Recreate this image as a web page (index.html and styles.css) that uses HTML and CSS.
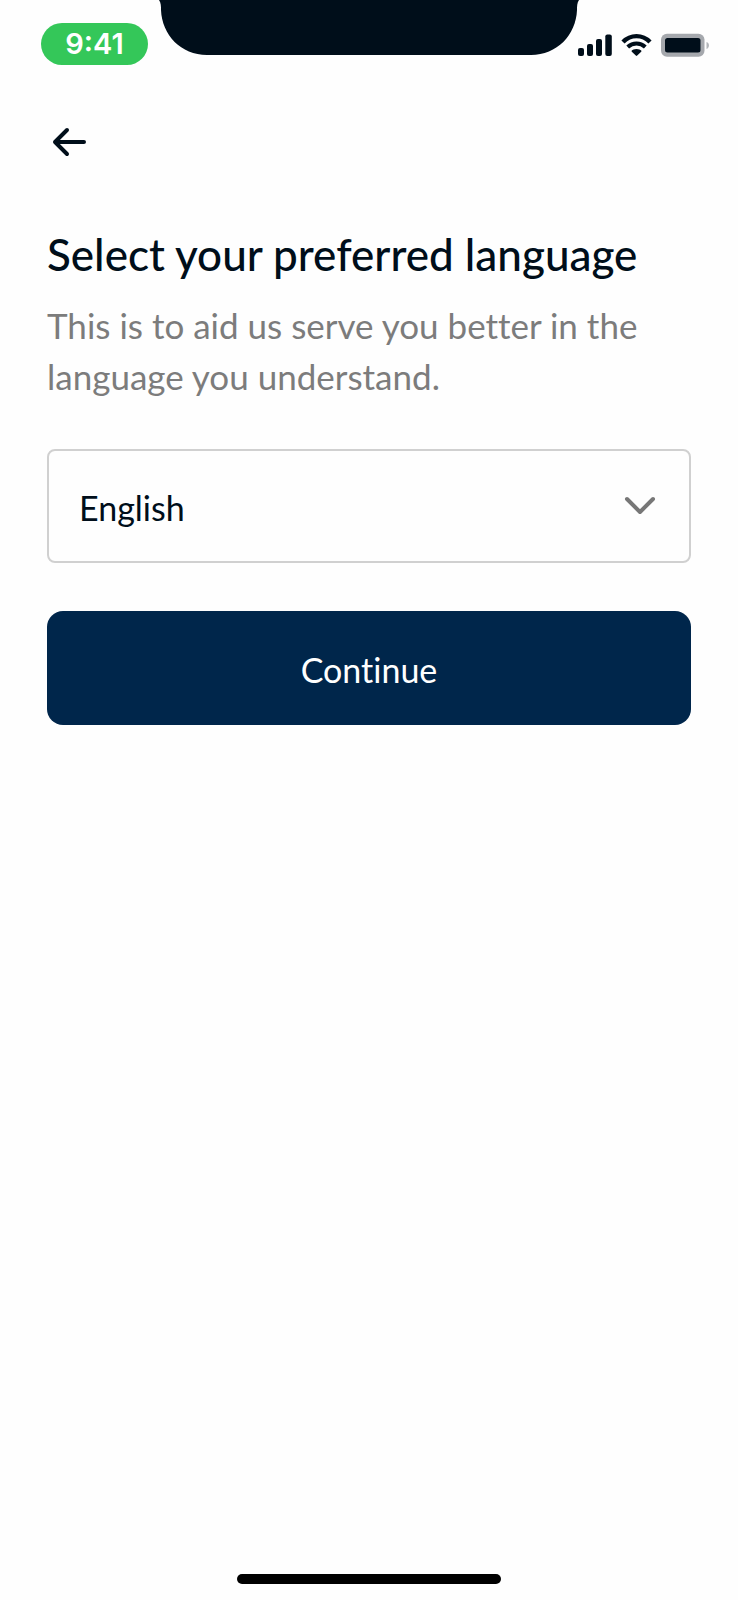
FILE: index.html
```html
<!DOCTYPE html>
<html lang="en">
<head>
<meta charset="utf-8">
<meta name="viewport" content="width=device-width, initial-scale=1">
<title>Select your preferred language</title>
<link rel="stylesheet" href="styles.css">
</head>
<body class="screen">
  <header class="status">
    <div class="status-left"><time class="clock">9:41</time></div>
    <svg class="notch" viewBox="0 0 420 55" aria-hidden="true">
      <path d="M0 0C2 3 2 6 2 10C3 35 22 55 48 55H372C398 55 417 35 418 10C418 6 418 3 420 0Z" fill="#000e1a"/>
    </svg>
    <div class="status-right">
      <svg class="status-icons" viewBox="1 0 132 24" role="img" aria-label="Signal, Wi-Fi and battery">
        <g fill="#000e1a">
          <rect x="0" y="14" width="6" height="8" rx="2"/>
          <rect x="9" y="10" width="6" height="12" rx="2"/>
          <rect x="18" y="5" width="6" height="17" rx="2"/>
          <rect x="27.300" y="0.500" width="6.500" height="21.500" rx="2"/>
          <path d="M58.500 15C60.800 15 62.400 15.800 63.200 16.500C63.600 16.900 63.600 17.300 63.200 17.700L59.200 21.600C58.700 22.100 58.300 22.100 57.800 21.600L53.800 17.700C53.400 17.300 53.400 16.900 53.800 16.500C54.600 15.800 56.200 15 58.500 15Z"/>
        </g>
        <g fill="none" stroke="#000e1a">
          <path d="M45 8C52.500 .2 64.500 .2 72 8" stroke-width="4.400"/>
          <path d="M49.700 13C54.800 8.200 62.200 8.200 67.300 13" stroke-width="4"/>
        </g>
        <rect x="83" y="-.3" width="43.500" height="23" rx="6" fill="#a5a8ad"/>
        <rect x="87" y="4" width="35.500" height="14.500" rx="2.500" fill="#000e1a"/>
        <path d="M128.500 8C131.800 8.800 131.800 14 128.500 15Z" fill="#b3b6ba"/>
      </svg>
    </div>
  </header>

  <main class="content">
    <button class="back" type="button" aria-label="Back">
      <svg viewBox="0 0 36 30" aria-hidden="true"><path d="M16 3L4 15L16 27M4 15H33" fill="none" stroke="#000e1a" stroke-width="4" stroke-linecap="round" stroke-linejoin="round"/></svg>
    </button>
    <h1 class="title" id="language-title">Select your preferred language</h1>
    <p class="intro">This is to aid us serve you better in the language you understand.</p>
    <form class="form">
      <div class="field">
        <select class="language" name="language" aria-labelledby="language-title">
          <option>English</option>
        </select>
        <svg class="chevron" viewBox="0 0 32 20" aria-hidden="true"><path d="M3 3L16 16L29 3" fill="none" stroke="#777" stroke-width="4" stroke-linecap="round" stroke-linejoin="round"/></svg>
      </div>
      <button class="continue" type="button">Continue</button>
    </form>
  </main>
  <div class="home-bar"></div>
</body>
</html>
```
FILE: styles.css
```css
* {
  box-sizing: border-box;
}

.screen {
  display: flex;
  flex-direction: column;
  min-height: 100vh;
  margin: 0;
  background: #fefefe;
  color: #000e1a;
  font-family: Lato, "Open Sans", sans-serif;
  font-variant-ligatures: none;
}

.status {
  display: grid;
  grid-template-columns: 1fr 420px 1fr;
  align-items: start;
}

.status-left {
  display: flex;
  justify-content: flex-end;
  padding: 23px 11px 0 0;
}

.clock {
  width: 107px;
  border-radius: 21px;
  background: #34c759;
  color: #fff;
  font: 600 29px/42px Inter, sans-serif;
  text-align: center;
}

.notch {
  display: block;
  width: 420px;
  height: 55px;
}

.status-right {
  padding-top: 34px;
}

.status-icons {
  display: block;
  width: 132px;
  height: 24px;
  overflow: visible;
}

.content {
  flex: 1;
  padding: 62px 47px 0;
}

.back {
  display: block;
  padding: 0 4px;
  border: 0;
  background: none;
  cursor: pointer;
}

.back svg {
  display: block;
  width: 36px;
  height: 30px;
}

.title {
  margin: 67px 0 0;
  font-size: 44px;
  font-weight: 500;
  line-height: 60px;
}

.intro {
  margin: 16px 0 0;
  color: #7c7c7c;
  font-size: 35px;
  line-height: 51px;
}

.form {
  display: grid;
  gap: 48px;
  margin-top: 47px;
}

.field {
  display: grid;
  align-items: center;
}

.language,
.chevron {
  grid-area: 1 / 1;
}

.language {
  width: 100%;
  height: 114px;
  padding: 4px 30px 0;
  border: 2px solid #d0d0d0;
  border-radius: 8px;
  appearance: none;
  background: #fefefe;
  color: inherit;
  font: 34px/40px Lato, sans-serif;
}

.chevron {
  justify-self: end;
  width: 32px;
  height: 20px;
  margin-right: 35px;
  pointer-events: none;
}

.continue {
  height: 114px;
  padding: 4px 30px 0;
  border: 0;
  border-radius: 16px;
  background: #00264b;
  color: #fff;
  font: 34px/40px Lato, sans-serif;
  font-variant-ligatures: none;
  cursor: pointer;
}

.home-bar {
  width: 264px;
  height: 10px;
  margin: 0 auto 16px;
  border-radius: 5px;
  background: #000;
}
```
